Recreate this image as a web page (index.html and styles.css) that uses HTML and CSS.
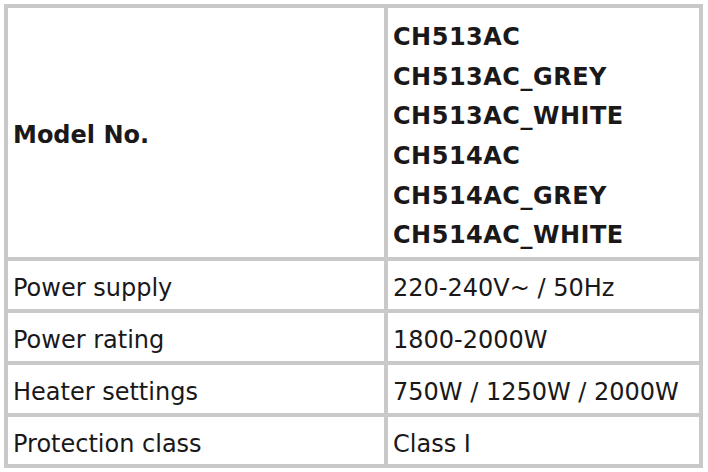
FILE: index.html
```html
<!DOCTYPE html>
<html>
<head>
<meta charset="utf-8">
<link rel="stylesheet" href="styles.css">
</head>
<body>
<table class="spec">
  <colgroup>
    <col class="col-label">
    <col class="col-value">
  </colgroup>
  <tr class="head-row">
    <td class="label strong">Model No.</td>
    <td class="models strong">
      <div>CH513AC</div>
      <div>CH513AC_GREY</div>
      <div>CH513AC_WHITE</div>
      <div>CH514AC</div>
      <div>CH514AC_GREY</div>
      <div>CH514AC_WHITE</div>
    </td>
  </tr>
  <tr class="row">
    <td class="label">Power supply</td>
    <td class="value">220-240V~ / 50Hz</td>
  </tr>
  <tr class="row">
    <td class="label">Power rating</td>
    <td class="value">1800-2000W</td>
  </tr>
  <tr class="row">
    <td class="label">Heater settings</td>
    <td class="value">750W / 1250W / 2000W</td>
  </tr>
  <tr class="row last">
    <td class="label">Protection class</td>
    <td class="value">Class I</td>
  </tr>
</table>
</body>
</html>
```
FILE: styles.css
```css
html, body {
  margin: 0;
  padding: 0;
  background: #ffffff;
}
body {
  padding: 4px;
  font-family: "DejaVu Sans", "Liberation Sans", sans-serif;
  color: #1a1819;
}
.spec {
  border-collapse: separate;
  border-spacing: 4px;
  background: #c9c9c9;
  width: 699px;
  table-layout: fixed;
}
.col-label {
  width: 376px;
}
.col-value {
  width: 311px;
}
.spec td {
  background: #ffffff;
  padding: 0 0 0 5px;
  vertical-align: middle;
  font-size: 24px;
  line-height: 28px;
  box-sizing: border-box;
}
.strong {
  font-weight: bold;
}
.head-row td {
  height: 249px;
}
.head-row td.label {
  padding-top: 4px;
}
.models {
  padding-top: 10px !important;
  padding-bottom: 1px !important;
}
.models div {
  line-height: 39.6px;
  letter-spacing: 0.5px;
}
.row td {
  height: 48px;
  padding-top: 6px;
}
.row.last td {
  height: 47px;
}
```
